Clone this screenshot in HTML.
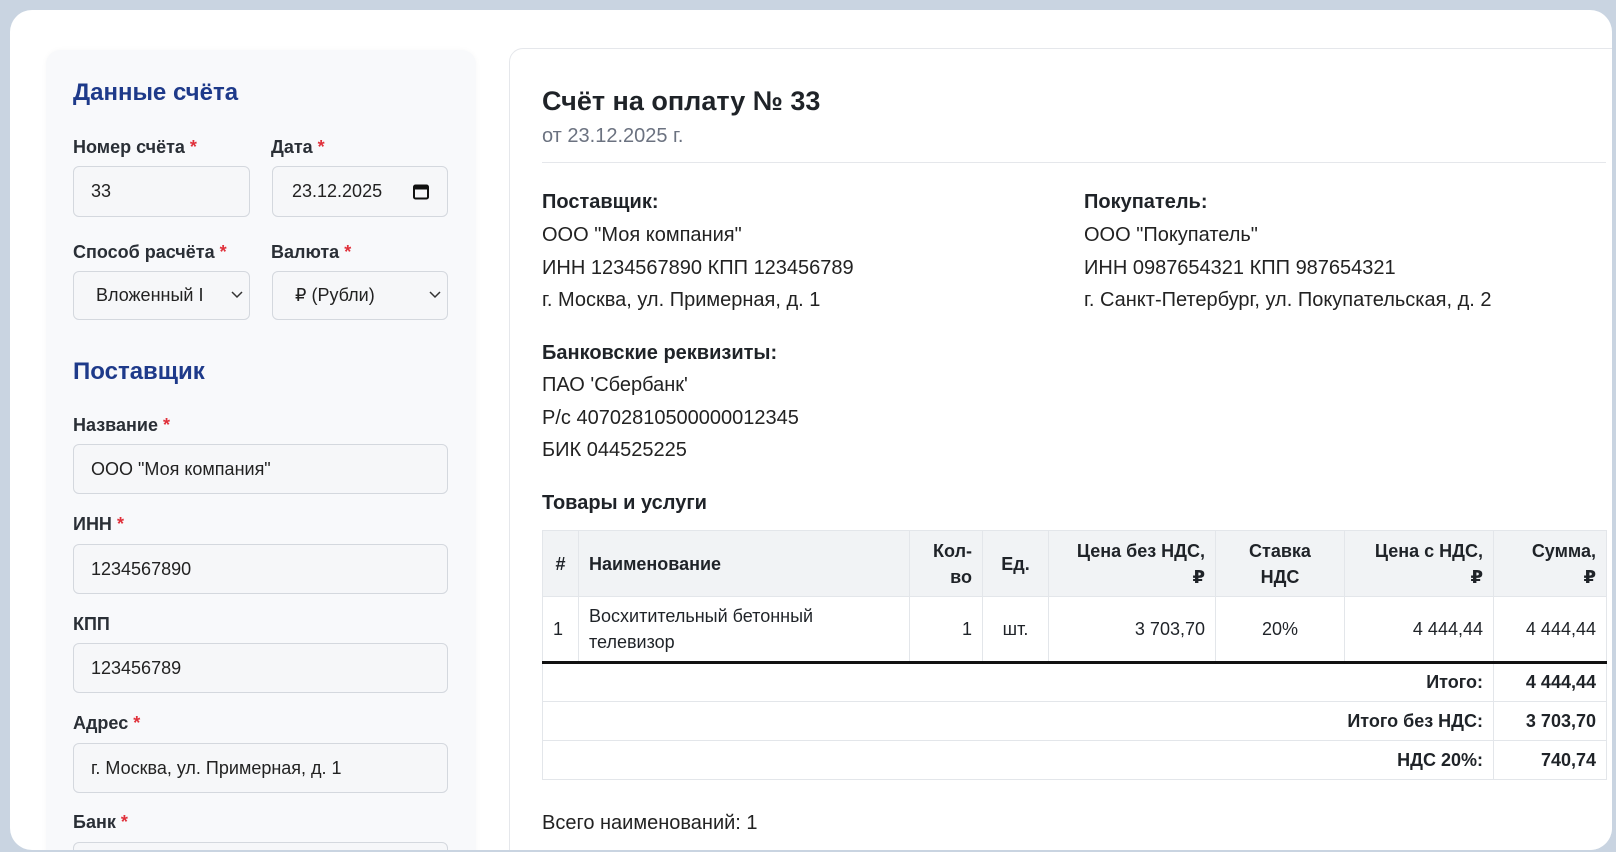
<!DOCTYPE html>
<html><head><meta charset="utf-8"><style>
*{box-sizing:border-box;margin:0;padding:0}
body{width:1616px;height:852px;overflow:hidden;background:#c9d4e1;font-family:"Liberation Sans","DejaVu Sans",sans-serif;color:#1f2328;position:relative}
.frame{position:absolute;left:10px;top:10px;width:1602px;height:840px;background:#fff;border-radius:22px;overflow:hidden}
.a{position:absolute;white-space:nowrap}
.left{position:absolute;left:36px;top:40px;width:430px;height:820px;background:#f8f9fb;border-radius:14px;box-shadow:0 0 6px rgba(0,0,0,.03)}
.h{color:#1e3a8a;font-weight:bold;font-size:24px}
.lab{font-size:18px;font-weight:bold;color:#2a2f36}
.lab b{color:#e0303a}
.in{position:absolute;background:#f6f7f9;border:1px solid #d4d8de;border-radius:6px;font-size:18px;color:#222;padding-left:17px;display:flex;align-items:center}
.right{position:absolute;left:499px;top:38px;width:1200px;height:900px;border:1px solid #e5e7eb;border-radius:14px;background:#fff}
.t{font-size:20px;color:#222}
.tb{font-size:20px;font-weight:bold;color:#1f2328}
table{position:absolute;left:532px;top:520px;border-collapse:collapse;font-size:18px;width:1064px;table-layout:fixed}
td,th{border:1px solid #e3e6ea;padding:0 10px}
th{background:#f1f3f5;font-weight:bold;height:66px;line-height:26px}
.r{text-align:right}.c{text-align:center}
</style></head><body>
<div class="frame">
 <div class="left"></div>
 <div class="a h" style="left:63px;top:69px">Данные счёта</div>
 <div class="a lab" style="left:63px;top:127px">Номер счёта <b>*</b></div>
 <div class="a lab" style="left:261px;top:127px">Дата <b>*</b></div>
 <div class="in" style="left:63px;top:156px;width:177px;height:51px">33</div>
 <div class="in" style="left:262px;top:156px;width:176px;height:51px;padding-left:19px">23.12.2025
  <svg style="position:absolute;right:18px;top:16px" width="16" height="17" viewBox="0 0 16 17"><rect x="1" y="2.5" width="14" height="13" rx="1.5" fill="none" stroke="#111" stroke-width="2"/><rect x="1" y="2.5" width="14" height="4" fill="#111"/></svg></div>
 <div class="a lab" style="left:63px;top:232px">Способ расчёта <b>*</b></div>
 <div class="a lab" style="left:261px;top:232px">Валюта <b>*</b></div>
 <div class="in" style="left:63px;top:261px;width:177px;height:49px;padding-left:22px">Вложенный I
  <svg style="position:absolute;right:6px;top:19px" width="12" height="8" viewBox="0 0 12 8"><path d="M1 1l5 5 5-5" fill="none" stroke="#333" stroke-width="1.5"/></svg></div>
 <div class="in" style="left:262px;top:261px;width:176px;height:49px;padding-left:22px">₽ (Рубли)
  <svg style="position:absolute;right:6px;top:19px" width="12" height="8" viewBox="0 0 12 8"><path d="M1 1l5 5 5-5" fill="none" stroke="#333" stroke-width="1.5"/></svg></div>
 <div class="a h" style="left:63px;top:348px">Поставщик</div>
 <div class="a lab" style="left:63px;top:405px">Название <b>*</b></div>
 <div class="in" style="left:63px;top:434px;width:375px;height:50px">ООО "Моя компания"</div>
 <div class="a lab" style="left:63px;top:504px">ИНН <b>*</b></div>
 <div class="in" style="left:63px;top:534px;width:375px;height:50px">1234567890</div>
 <div class="a lab" style="left:63px;top:604px">КПП</div>
 <div class="in" style="left:63px;top:633px;width:375px;height:50px">123456789</div>
 <div class="a lab" style="left:63px;top:703px">Адрес <b>*</b></div>
 <div class="in" style="left:63px;top:733px;width:375px;height:50px">г. Москва, ул. Примерная, д. 1</div>
 <div class="a lab" style="left:63px;top:802px">Банк <b>*</b></div>
 <div class="in" style="left:63px;top:832px;width:375px;height:50px"></div>

 <div class="right"></div>
 <div class="a" style="left:532px;top:76px;font-size:27px;font-weight:bold;color:#1f2328">Счёт на оплату № 33</div>
 <div class="a" style="left:532px;top:115px;font-size:20px;color:#6b7280">от 23.12.2025 г.</div>
 <div class="a" style="left:532px;top:152px;width:1064px;height:1px;background:#e5e7eb"></div>
 <div class="a tb" style="left:532px;top:181px">Поставщик:</div>
 <div class="a t" style="left:532px;top:209px;line-height:32.5px">ООО "Моя компания"<br>ИНН 1234567890 КПП 123456789<br>г. Москва, ул. Примерная, д. 1</div>
 <div class="a tb" style="left:1074px;top:181px">Покупатель:</div>
 <div class="a t" style="left:1074px;top:209px;line-height:32.5px">ООО "Покупатель"<br>ИНН 0987654321 КПП 987654321<br>г. Санкт-Петербург, ул. Покупательская, д. 2</div>
 <div class="a tb" style="left:532px;top:332px">Банковские реквизиты:</div>
 <div class="a t" style="left:532px;top:359px;line-height:32.5px">ПАО 'Сбербанк'<br>Р/с 40702810500000012345<br>БИК 044525225</div>
 <div class="a tb" style="left:532px;top:482px">Товары и услуги</div>
 <table>
  <colgroup><col style="width:36px"><col style="width:331px"><col style="width:73px"><col style="width:66px"><col style="width:167px"><col style="width:129px"><col style="width:149px"><col style="width:113px"></colgroup>
  <tr><th class="c" style="padding:0 4px">#</th><th style="text-align:left">Наименование</th><th class="r">Кол-<br>во</th><th class="c" style="padding:0 4px">Ед.</th><th class="r">Цена без НДС,<br>₽</th><th class="c">Ставка<br>НДС</th><th class="r">Цена с НДС,<br>₽</th><th class="r">Сумма,<br>₽</th></tr>
  <tr style="height:66px;border-bottom:3px solid #111"><td style="padding:0 10px">1</td><td style="line-height:26px">Восхитительный бетонный<br>телевизор</td><td class="r">1</td><td class="c" style="padding:0 4px">шт.</td><td class="r">3 703,70</td><td class="c">20%</td><td class="r">4 444,44</td><td class="r">4 444,44</td></tr>
  <tr style="height:39px"><td colspan="7" class="r"><b>Итого:</b></td><td class="r"><b>4 444,44</b></td></tr>
  <tr style="height:39px"><td colspan="7" class="r"><b>Итого без НДС:</b></td><td class="r"><b>3 703,70</b></td></tr>
  <tr style="height:39px"><td colspan="7" class="r"><b>НДС 20%:</b></td><td class="r"><b>740,74</b></td></tr>
 </table>
 <div class="a t" style="left:532px;top:802px">Всего наименований: 1</div>
</div>
</body></html>
